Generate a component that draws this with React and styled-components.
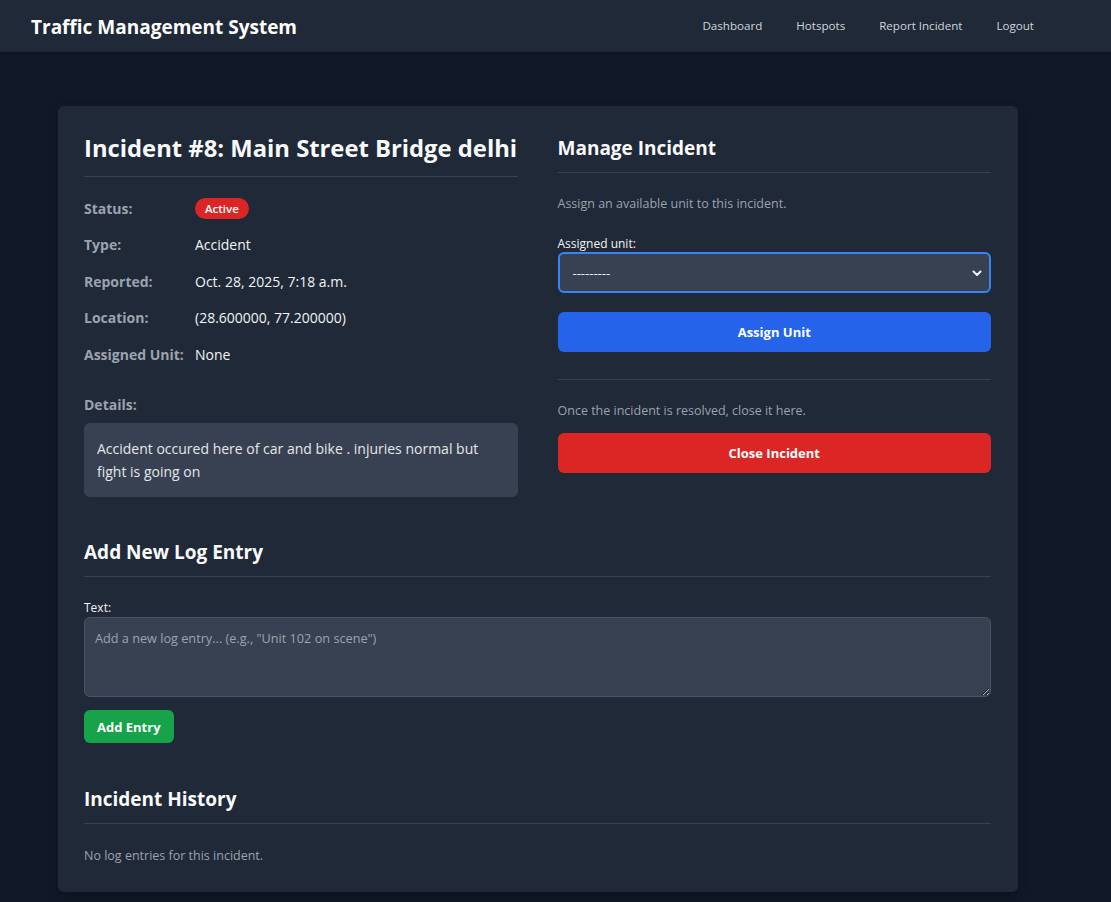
import styled, { createGlobalStyle } from "styled-components";

const GlobalStyle = createGlobalStyle`
  body {
    margin: 0;
    background: #111827;
    font-family: "Segoe UI", "Open Sans", "Noto Sans", sans-serif;
    color: #f9fafb;
  }
  * { box-sizing: border-box; }
`;

const NavBar = styled.nav`
  height: 52px;
  background: #1f2937;
  display: flex;
  align-items: center;
  justify-content: space-between;
  padding: 0 77px 0 31px;
  box-shadow: 0 1px 3px rgba(0, 0, 0, 0.3);
`;

const Brand = styled.div`
  font-size: 19px;
  font-weight: 700;
  color: #ffffff;
  margin-top: 1px;
`;

const NavLinks = styled.div`
  display: flex;
  gap: 34px;
  margin-top: -2px;
`;

const NavLink = styled.a`
  font-size: 11.6px;
  color: #d1d5db;
  text-decoration: none;
`;

const Page = styled.main`
  padding: 54px 0 40px 58px;
`;

const Card = styled.section`
  width: 960px;
  background: #1f2937;
  border-radius: 6px;
  padding: 26px 27px 28px 26px;
  box-shadow: 0 4px 10px rgba(0, 0, 0, 0.25);
`;

const Columns = styled.div`
  display: grid;
  grid-template-columns: 1fr 1fr;
  gap: 40px;
`;

const Title = styled.h1`
  margin: 0;
  font-size: 23.8px;
  font-weight: 700;
  white-space: nowrap;
  padding-bottom: 12px;
  border-bottom: 1px solid #374151;
`;

const SubTitle = styled.h2`
  margin: ${(p) => p.$mt || 0}px 0 0;
  font-size: 19px;
  font-weight: 700;
  padding-bottom: 11px;
  border-bottom: 1px solid #374151;
`;

const InfoList = styled.div`
  margin-top: 20px;
  display: flex;
  flex-direction: column;
  gap: 14.6px;
`;

const InfoRow = styled.div`
  display: flex;
  align-items: center;
  min-height: 22px;
`;

const Label = styled.span`
  width: 111px;
  flex-shrink: 0;
  font-size: 14px;
  font-weight: 700;
  color: #9ca3af;
`;

const Value = styled.span`
  font-size: 14px;
  color: #f3f4f6;
`;

const Badge = styled.span`
  display: inline-block;
  background: #dc2626;
  color: #fff;
  font-size: 11.5px;
  font-weight: 600;
  padding: 3px 10px;
  border-radius: 999px;
`;

const DetailsLabel = styled.div`
  margin-top: 30px;
  font-size: 14px;
  font-weight: 700;
  color: #9ca3af;
`;

const DetailsBox = styled.div`
  margin-top: 9px;
  background: #374151;
  border-radius: 6px;
  padding: 14px 13px;
  font-size: 14px;
  line-height: 23px;
  color: #e5e7eb;
`;

const Muted = styled.p`
  margin: ${(p) => p.$mt || 0}px 0 0;
  font-size: 12.5px;
  color: #9ca3af;
`;

const FieldLabel = styled.label`
  display: block;
  margin-top: ${(p) => p.$mt || 0}px;
  font-size: 12px;
  color: #f3f4f6;
`;

const Select = styled.div`
  height: 41px;
  background: #374151;
  border: 2px solid #3b82f6;
  border-radius: 6px;
  display: flex;
  align-items: center;
  justify-content: space-between;
  padding: 0 6px 0 13px;
  font-size: 13px;
  color: #f3f4f6;
`;

const Button = styled.button`
  display: block;
  width: ${(p) => (p.$auto ? "auto" : "100%")};
  height: ${(p) => p.$h || 40}px;
  margin-top: ${(p) => p.$mt || 0}px;
  padding: 0 13px;
  border: none;
  border-radius: 6px;
  background: ${(p) => p.$bg};
  color: #fff;
  font-family: inherit;
  font-size: 13px;
  font-weight: 700;
`;

const Divider = styled.hr`
  margin: 27px 0 0;
  border: none;
  border-top: 1px solid #374151;
`;

const TextArea = styled.textarea`
  display: block;
  width: 100%;
  height: 80px;
  margin-top: 1px;
  background: #374151;
  border: 1px solid #4b5563;
  border-radius: 6px;
  padding: 11px 10px;
  font-family: inherit;
  font-size: 12.7px;
  color: #f3f4f6;
  resize: vertical;
  &::placeholder { color: #9ca3af; }
`;

const Chevron = () => (
  <svg width="12" height="12" viewBox="0 0 12 12">
    <path d="M2.5 4.5 L6 8 L9.5 4.5" fill="none" stroke="#f3f4f6" strokeWidth="2" strokeLinecap="round" strokeLinejoin="round" />
  </svg>
);

const details = [
  ["Type:", "Accident"],
  ["Reported:", "Oct. 28, 2025, 7:18 a.m."],
  ["Location:", "(28.600000, 77.200000)"],
  ["Assigned Unit:", "None"],
];

export default function App() {
  return (
    <>
      <GlobalStyle />
      <NavBar>
        <Brand>Traffic Management System</Brand>
        <NavLinks>
          <NavLink href="#">Dashboard</NavLink>
          <NavLink href="#">Hotspots</NavLink>
          <NavLink href="#">Report Incident</NavLink>
          <NavLink href="#">Logout</NavLink>
        </NavLinks>
      </NavBar>
      <Page>
        <Card>
          <Columns>
            <div>
              <Title>Incident #8: Main Street Bridge delhi</Title>
              <InfoList>
                <InfoRow>
                  <Label>Status:</Label>
                  <Badge>Active</Badge>
                </InfoRow>
                {details.map(([k, v]) => (
                  <InfoRow key={k}>
                    <Label>{k}</Label>
                    <Value>{v}</Value>
                  </InfoRow>
                ))}
              </InfoList>
              <DetailsLabel>Details:</DetailsLabel>
              <DetailsBox>
                Accident occured here of car and bike . injuries normal but fight is going on
              </DetailsBox>
            </div>
            <div>
              <SubTitle $mt={3}>Manage Incident</SubTitle>
              <Muted $mt={22}>Assign an available unit to this incident.</Muted>
              <FieldLabel $mt={23}>Assigned unit:</FieldLabel>
              <Select>
                <span>---------</span>
                <Chevron />
              </Select>
              <Button $bg="#2563eb" $mt={19}>Assign Unit</Button>
              <Divider />
              <Muted $mt={22}>Once the incident is resolved, close it here.</Muted>
              <Button $bg="#dc2626" $mt={14}>Close Incident</Button>
            </div>
          </Columns>
          <SubTitle $mt={42}>Add New Log Entry</SubTitle>
          <FieldLabel $mt={22}>Text:</FieldLabel>
          <TextArea placeholder={'Add a new log entry... (e.g., "Unit 102 on scene")'} />
          <Button $bg="#16a34a" $mt={13} $h={33} $auto>Add Entry</Button>
          <SubTitle $mt={43}>Incident History</SubTitle>
          <Muted $mt={23}>No log entries for this incident.</Muted>
        </Card>
      </Page>
    </>
  );
}
